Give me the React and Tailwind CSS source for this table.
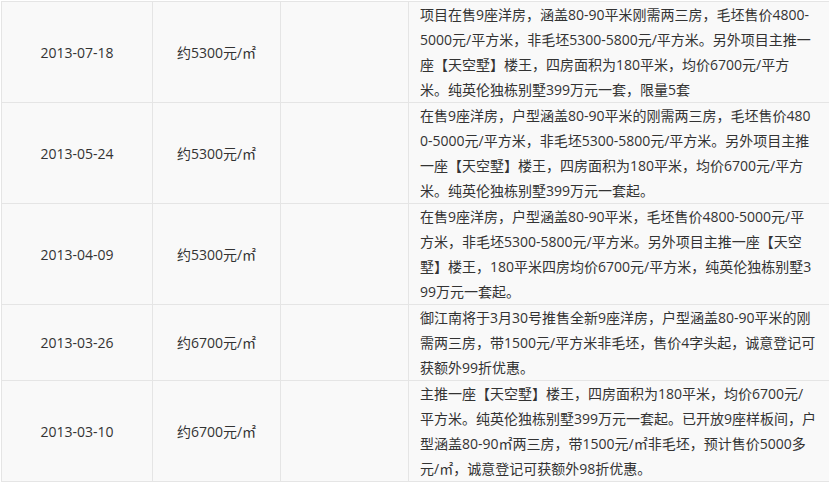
import React from "react";

const rows = [
  {
    date: "2013-07-18",
    price: "约5300元/㎡",
    lines: [
      "项目在售9座洋房，涵盖80-90平米刚需两三房，毛坯售价4800-",
      "5000元/平方米，非毛坯5300-5800元/平方米。另外项目主推一",
      "座【天空墅】楼王，四房面积为180平米，均价6700元/平方",
      "米。纯英伦独栋别墅399万元一套，限量5套",
    ],
  },
  {
    date: "2013-05-24",
    price: "约5300元/㎡",
    lines: [
      "在售9座洋房，户型涵盖80-90平米的刚需两三房，毛坯售价480",
      "0-5000元/平方米，非毛坯5300-5800元/平方米。另外项目主推",
      "一座【天空墅】楼王，四房面积为180平米，均价6700元/平方",
      "米。纯英伦独栋别墅399万元一套起。",
    ],
  },
  {
    date: "2013-04-09",
    price: "约5300元/㎡",
    lines: [
      "在售9座洋房，户型涵盖80-90平米，毛坯售价4800-5000元/平",
      "方米，非毛坯5300-5800元/平方米。另外项目主推一座【天空",
      "墅】楼王，180平米四房均价6700元/平方米，纯英伦独栋别墅3",
      "99万元一套起。",
    ],
  },
  {
    date: "2013-03-26",
    price: "约6700元/㎡",
    lines: [
      "御江南将于3月30号推售全新9座洋房，户型涵盖80-90平米的刚",
      "需两三房，带1500元/平方米非毛坯，售价4字头起，诚意登记可",
      "获额外99折优惠。",
    ],
  },
  {
    date: "2013-03-10",
    price: "约6700元/㎡",
    lines: [
      "主推一座【天空墅】楼王，四房面积为180平米，均价6700元/",
      "平方米。纯英伦独栋别墅399万元一套起。已开放9座样板间，户",
      "型涵盖80-90㎡两三房，带1500元/㎡非毛坯，预计售价5000多",
      "元/㎡，诚意登记可获额外98折优惠。",
    ],
  },
];

const App = () => {
  return (
    <div
      className="w-[829px] h-[482px] overflow-hidden bg-white pl-[1px] pt-[1px] text-[14px] text-[#333]"
      style={{ fontFamily: '"Open Sans", "Noto Sans CJK SC", sans-serif' }}
    >
      <div className="w-[900px] border-l border-t border-[#e5e5e5] bg-[#f9f9f9]">
        {rows.map((row) => (
          <div key={row.date} className="flex">
            {/* date */}
            <div className="w-[151px] shrink-0 border-r border-b border-[#e5e5e5] flex items-center justify-center">
              {row.date}
            </div>
            {/* price */}
            <div className="w-[128px] shrink-0 border-r border-b border-[#e5e5e5] flex items-center justify-center">
              {row.price}
            </div>
            {/* empty column */}
            <div className="w-[128px] shrink-0 border-r border-b border-[#e5e5e5]"></div>
            {/* description */}
            <div className="flex-1 border-b border-[#e5e5e5] pl-[11px] leading-[25px]">
              {row.lines.map((line, i) => (
                <div key={i} className="whitespace-nowrap">
                  {line}
                </div>
              ))}
            </div>
          </div>
        ))}
      </div>
    </div>
  );
};

export default App;
